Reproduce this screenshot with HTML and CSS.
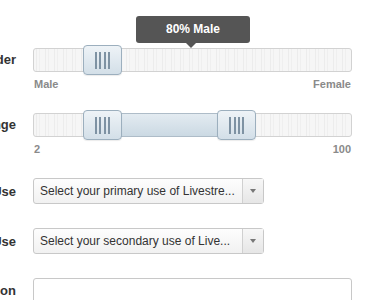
FILE: index.html
```html
<!DOCTYPE html>
<html lang="en">
<head>
    <meta charset="UTF-8">
    <meta name="viewport" content="width=device-width, initial-scale=1.0">
    <title>Profile</title>
    <link rel="stylesheet" href="styles.css">
</head>
<body>
    <div class="form">
        <!-- gender slider -->
        <div class="row slider_row">
            <label class="lbl">Gender</label>
            <div class="field">
                <div class="slider">
                    <div class="track"></div>
                    <a class="handle" style="left:50px;"><span class="grip"></span></a>
                    <div class="tip" style="left:103px;">80% Male</div>
                </div>
                <div class="scale"><span>Male</span><span>Female</span></div>
            </div>
        </div>

        <!-- age range -->
        <div class="row slider_row">
            <label class="lbl">Age Range</label>
            <div class="field">
                <div class="slider">
                    <div class="track"></div>
                    <div class="range" style="left:70px; width:134px;"></div>
                    <a class="handle" style="left:50px;"><span class="grip"></span></a>
                    <a class="handle" style="left:184px;"><span class="grip"></span></a>
                </div>
                <div class="scale"><span>2</span><span>100</span></div>
            </div>
        </div>

        <div class="row select_row">
            <label class="lbl">Primary Use</label>
            <div class="field">
                <div class="select">
                    <span class="sel_text">Select your primary use of Livestre...</span>
                    <span class="sel_btn"><i class="caret"></i></span>
                </div>
            </div>
        </div>

        <div class="row select_row second">
            <label class="lbl">Secondary Use</label>
            <div class="field">
                <div class="select">
                    <span class="sel_text">Select your secondary use of Live...</span>
                    <span class="sel_btn"><i class="caret"></i></span>
                </div>
            </div>
        </div>

        <div class="row input_row">
            <label class="lbl">Description</label>
            <div class="field">
                <input type="text" class="text_in">
            </div>
        </div>
    </div>
</body>
</html>
```

FILE: styles.css
```css
*{margin:0; padding:0; box-sizing:border-box;}
a{text-decoration:none;}
html,body{background:#fff; overflow:hidden;}
body{font-family:"Liberation Sans", Arial, Helvetica, sans-serif; color:#333;}

.form{margin-left:-84px; padding-top:48px;}

.row{display:grid; grid-template-columns:100px 319px; column-gap:17px;}
.lbl{text-align:right; font-weight:bold; font-size:13px; color:#333; white-space:nowrap;}

/* sliders */
.slider_row{align-items:start; margin-bottom:22px;}
.slider_row .lbl{line-height:24px;}
.slider{position:relative; height:24px;}
.track{
    height:24px;
    border:1px solid #d2d2d2;
    border-radius:3px;
    background:
        repeating-linear-gradient(90deg, rgba(255,255,255,0) 0 2px, #ececec 2px 3px, rgba(255,255,255,0) 3px 5px, #efefef 5px 6px, rgba(255,255,255,0) 6px 9px),
        #f6f6f6;
}
.range{
    position:absolute; top:0; height:24px;
    border-top:1px solid #aebcc8; border-bottom:1px solid #aebcc8;
    background:linear-gradient(#e3ebf1, #cbd9e3);
}
.handle{
    position:absolute; top:-3px;
    width:39px; height:30px;
    border:1px solid #9cafbe;
    border-radius:4px;
    background:linear-gradient(#eef3f7, #d3dfe8);
    box-shadow:0 1px 1px rgba(0,0,0,0.08);
    display:flex; align-items:center; justify-content:center;
}
.grip{
    width:15px; height:17px;
    background:repeating-linear-gradient(90deg, #7e92a3 0 2px, transparent 2px 4.5px);
}
.tip{
    position:absolute; top:-32px;
    width:114px; height:27px;
    background:#555;
    border-radius:3px;
    color:#fff; font-weight:bold; font-size:12px;
    line-height:27px; text-align:center;
}
.tip:after{
    content:""; position:absolute; left:50px; bottom:-5px;
    border-left:5px solid transparent; border-right:5px solid transparent;
    border-top:5px solid #555;
}
.scale{
    display:flex; justify-content:space-between;
    margin-top:5px; padding:0 1px;
    font-size:11px; font-weight:bold; color:#8a8a8a; line-height:14px;
}

/* selects */
.select_row{align-items:center; margin-top:3px; margin-bottom:24px;}
.select_row.second{margin-top:0; margin-bottom:24px;}
.select{
    display:flex; width:231px; height:26px;
    border:1px solid #c8c8c8; border-radius:3px;
    background:linear-gradient(#fdfdfd, #f1f1f1);
    font-size:12px; color:#333;
}
.sel_text{flex:1; padding-left:6px; line-height:24px; white-space:nowrap; overflow:hidden;}
.sel_btn{
    width:21px; border-left:1px solid #d0d0d0;
    background:linear-gradient(#f7f7f7, #e6e6e6);
    display:flex; align-items:center; justify-content:center;
}
.caret{
    border-left:3.5px solid transparent; border-right:3.5px solid transparent;
    border-top:4px solid #777;
}

/* text input */
.input_row{align-items:start;}
.input_row .lbl{line-height:26px;}
.text_in{
    width:319px; height:28px;
    border:1px solid #c8c8c8; border-radius:3px;
    background:#fff;
}
```
